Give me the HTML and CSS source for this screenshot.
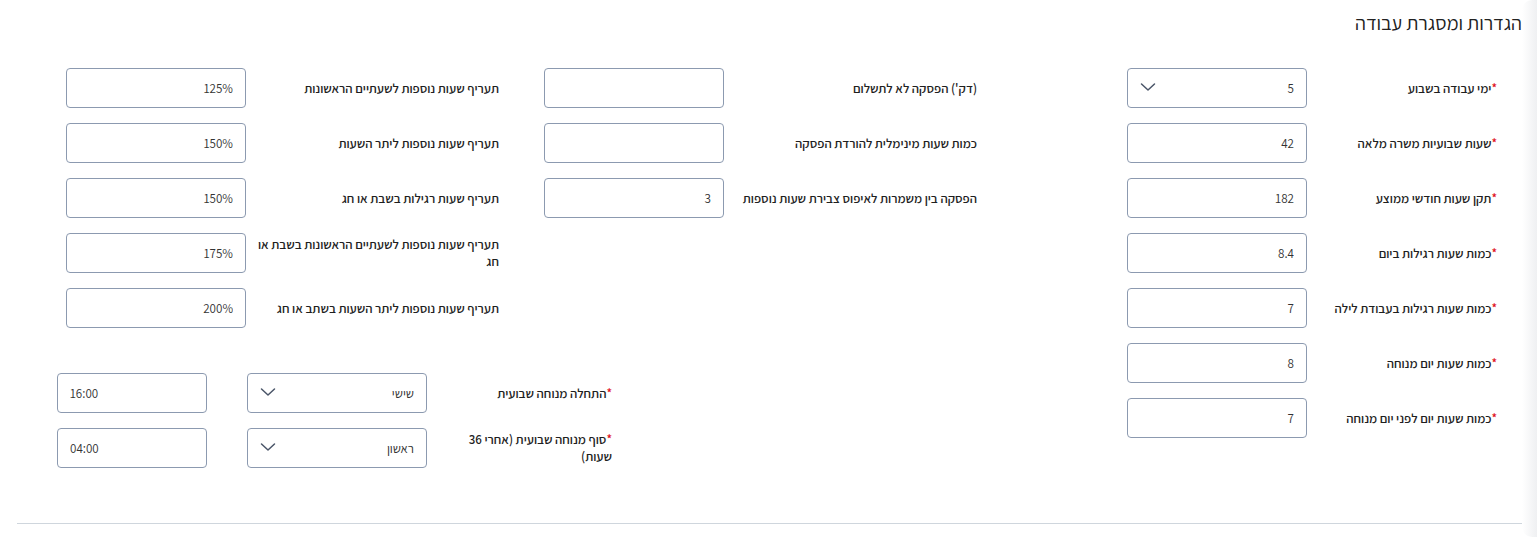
FILE: index.html
```html
<!DOCTYPE html>
<html lang="he" dir="rtl">
<head>
<meta charset="utf-8">
<title>הגדרות ומסגרת עבודה</title>
<link rel="stylesheet" href="styles.css">
</head>
<body>
<div class="page">
	<div class="edge"></div>
	<div class="card">
		<h2 class="title">הגדרות ומסגרת עבודה</h2>

		<div class="form">
			<!-- main column -->
			<div class="col col-main">
				<div class="field">
					<label class="lbl req">ימי עבודה בשבוע</label>
					<div class="select">
						<span>5</span>
						<svg class="chev" width="16" height="16" viewBox="0 0 16 16"><path d="M1.5 5L8 11L14.5 5" fill="none" stroke="#4a5568" stroke-width="1.5" stroke-linecap="round" stroke-linejoin="round"/></svg>
					</div>
				</div>
				<div class="field">
					<label class="lbl req">שעות שבועיות משרה מלאה</label>
					<input class="inp" type="text" value="42">
				</div>
				<div class="field">
					<label class="lbl req">תקן שעות חודשי ממוצע</label>
					<input class="inp" type="text" value="182">
				</div>
				<div class="field">
					<label class="lbl req">כמות שעות רגילות ביום</label>
					<input class="inp" type="text" value="8.4">
				</div>
				<div class="field">
					<label class="lbl req">כמות שעות רגילות בעבודת לילה</label>
					<input class="inp" type="text" value="7">
				</div>
				<div class="field">
					<label class="lbl req">כמות שעות יום מנוחה</label>
					<input class="inp" type="text" value="8">
				</div>
				<div class="field">
					<label class="lbl req">כמות שעות יום לפני יום מנוחה</label>
					<input class="inp" type="text" value="7">
				</div>
			</div>

			<div class="side">
				<div class="side-top">
					<!-- breaks -->
					<div class="col col-mid">
						<div class="field">
							<label class="lbl">(דק') הפסקה לא לתשלום</label>
							<input class="inp" type="text" value="">
						</div>
						<div class="field">
							<label class="lbl">כמות שעות מינימלית להורדת הפסקה</label>
							<input class="inp" type="text" value="">
						</div>
						<div class="field">
							<label class="lbl">הפסקה בין משמרות לאיפוס צבירת שעות נוספות</label>
							<input class="inp" type="text" value="3">
						</div>
					</div>
					<!-- rates -->
					<div class="col col-rates">
						<div class="field">
							<label class="lbl">תעריף שעות נוספות לשעתיים הראשונות</label>
							<input class="inp" type="text" value="125%">
						</div>
						<div class="field">
							<label class="lbl">תעריף שעות נוספות ליתר השעות</label>
							<input class="inp" type="text" value="150%">
						</div>
						<div class="field">
							<label class="lbl">תעריף שעות רגילות בשבת או חג</label>
							<input class="inp" type="text" value="150%">
						</div>
						<div class="field">
							<label class="lbl">תעריף שעות נוספות לשעתיים הראשונות בשבת או חג</label>
							<input class="inp" type="text" value="175%">
						</div>
						<div class="field">
							<label class="lbl">תעריף שעות נוספות ליתר השעות בשתב או חג</label>
							<input class="inp" type="text" value="200%">
						</div>
					</div>
				</div>

				<!-- weekly rest -->
				<div class="rest">
					<div class="field">
						<label class="lbl req">התחלה מנוחה שבועית</label>
						<div class="select">
							<span>שישי</span>
							<svg class="chev" width="16" height="16" viewBox="0 0 16 16"><path d="M1.5 5L8 11L14.5 5" fill="none" stroke="#4a5568" stroke-width="1.5" stroke-linecap="round" stroke-linejoin="round"/></svg>
						</div>
						<input class="inp time" type="text" value="16:00">
					</div>
					<div class="field">
						<label class="lbl req">סוף מנוחה שבועית (אחרי 36 שעות)</label>
						<div class="select">
							<span>ראשון</span>
							<svg class="chev" width="16" height="16" viewBox="0 0 16 16"><path d="M1.5 5L8 11L14.5 5" fill="none" stroke="#4a5568" stroke-width="1.5" stroke-linecap="round" stroke-linejoin="round"/></svg>
						</div>
						<input class="inp time" type="text" value="04:00">
					</div>
				</div>
			</div>
		</div>

		<hr class="divider">
	</div>
</div>
</body>
</html>
```

FILE: styles.css
```css
html, body {
	margin: 0;
	padding: 0;
	background: #fff;
}
body {
	font-family: "Assistant", "Liberation Sans", sans-serif;
	font-size: 13px;
	color: #1f1f1f;
}

.page {
	display: flex;
	height: 537px;
	overflow: hidden;
}
.edge {
	width: 15px;
	flex: none;
	background: linear-gradient(to right, #fff, #eff0f2);
	border-radius: 10px 0 0 10px;
}
.card {
	flex: 1;
	padding: 0 0 0 17px;
}

.title {
	margin: 0;
	padding-top: 9px;
	font-size: 20px;
	font-weight: normal;
	line-height: 28px;
	color: #222;
}

.form {
	display: flex;
	align-items: flex-start;
	margin-top: 31px;
	padding-right: 25px;
}

.col {
	display: flex;
	flex-direction: column;
	gap: 15px;
}
.col-main {
	width: 370px;
	margin-left: 150px;
}
.side-top {
	display: flex;
	gap: 45px;
}

.field {
	display: flex;
	align-items: center;
}
.lbl {
	width: 243px;
	margin-left: 10px;
	line-height: 17px;
	font-weight: 600;
}
.col-main .lbl {
	width: 190px;
	margin-left: 0;
}
.col-mid .lbl {
	width: 253px;
	margin-left: 0;
}
.req::before {
	content: "*";
	color: #e0141e;
}

.inp, .select {
	box-sizing: border-box;
	width: 180px;
	height: 40px;
	border: 1px solid #8c9ab0;
	border-radius: 4px;
	background: #fff;
	font-family: inherit;
	font-size: 13px;
	color: #333;
	padding: 0 12px;
}
.inp {
	text-align: right;
	outline: none;
}
.select {
	display: flex;
	align-items: center;
	justify-content: space-between;
}
.chev {
	margin-top: -3px;
}

.rest {
	display: flex;
	flex-direction: column;
	gap: 15px;
	margin-top: 45px;
	margin-right: 365px;
}
.rest .lbl {
	width: 160px;
	margin-left: 25px;
}
.inp.time {
	width: 150px;
	margin-right: 40px;
	direction: ltr;
	text-align: left;
}

.divider {
	border: 0;
	border-top: 1px solid #cfd6dd;
	margin: 55px 0 0;
}
```
